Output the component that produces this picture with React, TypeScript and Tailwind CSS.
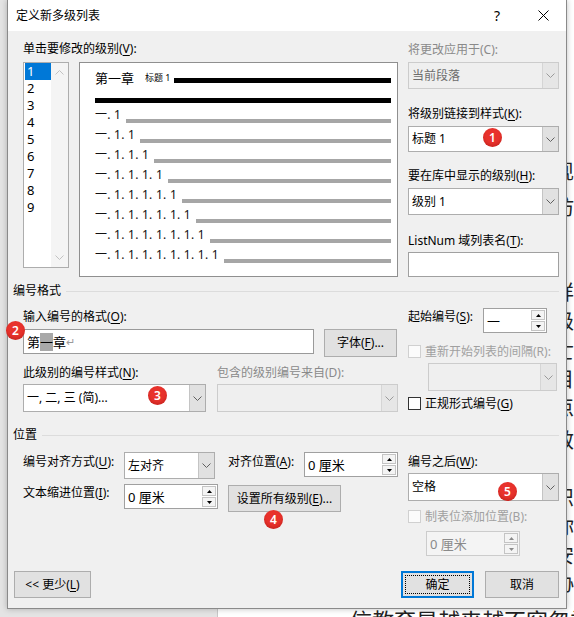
import type { ReactNode } from 'react'
import clsx from 'clsx'

const ui = "font-['Noto_Sans','Noto_Sans_CJK_SC',sans-serif]"

function U({ children }: { children: ReactNode }) {
  return <span className="underline underline-offset-[2px]">{children}</span>
}

function Chevron({ up, color = '#606060' }: { up?: boolean; color?: string }) {
  return (
    <svg width="9" height="5" viewBox="0 0 9 5" className={clsx(up && 'rotate-180')}>
      <path d="M0.5 0.5 L4.5 4.5 L8.5 0.5" fill="none" stroke={color} strokeWidth="1" />
    </svg>
  )
}

function Badge({ n, className }: { n: number; className: string }) {
  return (
    <span
      className={clsx(
        'absolute flex h-[19px] w-[19px] items-center justify-center rounded-full bg-[#e8322c] text-[12px] leading-none font-semibold text-white shadow-[inset_0_-2px_3px_rgba(120,0,0,0.25)]',
        className,
      )}
    >
      {n}
    </span>
  )
}

function Dropdown({
  text,
  disabled,
  className,
  children,
}: {
  text?: ReactNode
  disabled?: boolean
  className?: string
  children?: ReactNode
}) {
  return (
    <div
      className={clsx(
        'relative flex border',
        disabled ? 'border-[#cccccc] bg-[#efefef] text-[#6d6d6d]' : 'border-[#adadad] bg-white',
        className,
      )}
    >
      <div className="flex flex-1 items-center pl-[3px] leading-[16px] whitespace-nowrap">{text}</div>
      <div
        className={clsx(
          'flex w-[16px] items-center justify-center border-l',
          disabled ? 'border-[#d5d5d5] bg-[#e6e6e6]' : 'border-[#c4c4c4] bg-[#e1e1e1]',
        )}
      >
        <Chevron color={disabled ? '#9a9a9a' : '#606060'} />
      </div>
      {children}
    </div>
  )
}

function SpinBtn({ up, disabled }: { up?: boolean; disabled?: boolean }) {
  return (
    <div className="flex h-[10px] w-[14px] items-center justify-center border border-[#c4c4c4] bg-[#f4f4f4]">
      <svg width="5" height="3" viewBox="0 0 5 3">
        <path d={up ? 'M0 3 L2.5 0 L5 3 Z' : 'M0 0 L2.5 3 L5 0 Z'} fill={disabled ? '#8a8a8a' : '#000'} />
      </svg>
    </div>
  )
}

function Spinner({ text, disabled, className }: { text: string; disabled?: boolean; className?: string }) {
  return (
    <div
      className={clsx(
        'flex border',
        disabled ? 'border-[#cccccc] bg-[#f4f4f4] text-[#8a8a8a]' : 'border-[#a0a0a0] bg-white',
        className,
      )}
    >
      <div className="flex flex-1 items-center pl-[3px] text-[13px] leading-[16px]">{text}</div>
      <div className="flex flex-col justify-center gap-[1px] pr-[1px]">
        <SpinBtn up disabled={disabled} />
        <SpinBtn disabled={disabled} />
      </div>
    </div>
  )
}

function Checkbox({ disabled }: { disabled?: boolean }) {
  return (
    <span
      className={clsx(
        'h-[13px] w-[13px] shrink-0 border',
        disabled ? 'border-[#d0d0d0] bg-[#fbfbfb]' : 'border-[#333333] bg-white',
      )}
    />
  )
}

function Button({ children, focus, className }: { children: ReactNode; focus?: boolean; className?: string }) {
  return (
    <div
      className={clsx(
        'relative flex items-center justify-center bg-[#e1e1e1] leading-[16px] whitespace-nowrap',
        focus ? 'border-2 border-[#0078d7]' : 'border border-[#adadad]',
        className,
      )}
    >
      {focus && <span className="absolute inset-[2px] border border-dotted border-black" />}
      {children}
    </div>
  )
}

function Section({ title }: { title: string }) {
  return (
    <div className="-ml-[10px] flex h-[16px] items-center">
      <span className="leading-[16px] whitespace-nowrap">{title}</span>
      <div className="ml-[5px] h-px flex-1 bg-[#dcdcdc]" />
    </div>
  )
}

const levels = ['1', '2', '3', '4', '5', '6', '7', '8', '9']
const rows = ['一. 1', '一. 1. 1', '一. 1. 1. 1', '一. 1. 1. 1. 1', '一. 1. 1. 1. 1. 1', '一. 1. 1. 1. 1. 1. 1', '一. 1. 1. 1. 1. 1. 1. 1', '一. 1. 1. 1. 1. 1. 1. 1. 1']

const sideChars = [
  { c: '现', cls: 'mt-[158px]' },
  { c: '仿', cls: 'mt-[8px]' },
  { c: '详', cls: 'mt-[57px]' },
  { c: '级', cls: 'mt-[1px]' },
  { c: '亡', cls: 'mt-[2px]' },
  { c: '目', cls: 'mt-[0px]' },
  { c: '点', cls: 'mt-[0px]' },
  { c: '效', cls: 'mt-[5px]' },
  { c: '识', cls: 'mt-[29px]' },
  { c: '你', cls: 'mt-[1px]' },
  { c: '安', cls: 'mt-[1px]' },
  { c: '协', cls: 'mt-[0px]' },
]

export default function App() {
  return (
    <div className={clsx('relative h-[617px] w-[574px] overflow-hidden bg-white text-[12px] text-black', ui)}>
      {/* Word window behind the dialog */}
      <div className="flex h-full">
        <div className="h-full w-[230px] border-r border-[#c8c8c8] bg-[#e4e4e4]" />
        <div className="relative flex-1 bg-white text-[20px] text-[#222]">
          <div className="ml-[336px] flex flex-col">
            {sideChars.map((s) => (
              <span key={s.c} className={clsx('h-[28px] leading-[28px]', s.cls)}>
                {s.c}
              </span>
            ))}
          </div>
          <div className="absolute top-[605px] left-[132px] text-[22px] leading-[30px] whitespace-nowrap">
            信教育是越来越不容忽视。
          </div>
        </div>
      </div>

      {/* dialog */}
      <div className="absolute top-0 left-[7px] flex h-[609px] w-[560px] flex-col border-x border-b border-[#8a8a8a] bg-[#f0f0f0] shadow-[0_0_6px_rgba(0,0,0,0.25)]">
        <div className="flex h-[31px] shrink-0 items-center bg-white">
          <span className="flex-1 pl-[8px] leading-[16px]">定义新多级列表</span>
          <div className="flex h-full w-[46px] items-center justify-center text-[14px]">?</div>
          <div className="flex h-full w-[46px] items-center justify-center">
            <svg width="11" height="11" viewBox="0 0 11 11">
              <path d="M0.5 0.5 L10.5 10.5 M10.5 0.5 L0.5 10.5" stroke="#000" strokeWidth="1" />
            </svg>
          </div>
        </div>

        <div className="flex-1 pr-[7px] pl-[15px]">
          {/* levels + preview */}
          <div className="flex">
            <div className="w-[375px]">
              <div className="pt-[10px] leading-[16px]">
                单击要修改的级别(<U>V</U>):
              </div>
              <div className="mt-[5px] flex items-start">
                <div className="flex h-[206px] w-[46px] border border-[#adadad] bg-white">
                  <div className="flex-1">
                    {levels.map((l) => (
                      <div
                        key={l}
                        className={clsx(
                          'ml-[1px] h-[17px] w-[26px] pl-[2px] text-[13px] leading-[17px]',
                          l === '1' && 'bg-[#0078d7] text-white',
                        )}
                      >
                        {l}
                      </div>
                    ))}
                  </div>
                  <div className="flex w-[17px] flex-col items-center justify-between bg-[#f4f4f4] py-[7px]">
                    <Chevron up color="#c2c2c2" />
                    <Chevron color="#c2c2c2" />
                  </div>
                </div>
                <div className="ml-[10px] h-[215px] w-[319px] border border-[#8f8f8f] bg-white pr-[6px] pl-[15px]">
                  <div className="mt-[5px] flex h-[20px] items-center">
                    <span className="text-[13px] leading-[20px]">第一章</span>
                    <span className="ml-[11px] text-[9px] leading-[12px]">标题 1</span>
                    <div className="mt-[5px] ml-[3px] h-[5px] flex-1 bg-black" />
                  </div>
                  <div className="mt-[10px] h-[5px] bg-black" />
                  <div className="mt-[2px]">
                    {rows.map((r) => (
                      <div key={r} className="flex h-[20px] items-center">
                        <span className="leading-[20px] tracking-[0.25px] whitespace-pre text-[#111]">{r}</span>
                        <div className="mt-[12px] ml-[5px] h-[4px] flex-1 bg-[#a6a6a6]" />
                      </div>
                    ))}
                  </div>
                </div>
              </div>
            </div>

            <div className="ml-[10px] w-[151px]">
              <div className="pt-[11px] leading-[16px] text-[#8a8a8a]">将更改应用于(C):</div>
              <Dropdown disabled className="mt-[4px] h-[27px]" text="当前段落" />
              <div className="mt-[17px] leading-[16px]">
                将级别链接到样式(<U>K</U>):
              </div>
              <Dropdown className="mt-[4px] h-[26px]" text="标题 1">
                <Badge n={1} className="top-[1px] left-[74px]" />
              </Dropdown>
              <div className="mt-[16px] leading-[16px]">
                要在库中显示的级别(<U>H</U>):
              </div>
              <Dropdown className="mt-[4px] h-[27px]" text="级别 1" />
              <div className="mt-[18px] leading-[16px] whitespace-nowrap">
                ListNum 域列表名(<U>T</U>):
              </div>
              <div className="mt-[3px] h-[25px] border border-[#a0a0a0] bg-white" />
            </div>
          </div>

          {/* 编号格式 */}
          <div className="mt-[6px]">
            <Section title="编号格式" />
          </div>
          <div className="flex">
            <div className="w-[375px]">
              <div className="mt-[10px] leading-[16px]">
                输入编号的格式(<U>O</U>):
              </div>
              <div className="mt-[4px] flex items-start">
                <div className="relative flex h-[25px] w-[291px] items-center border border-[#9a9a9a] bg-white pl-[3px] text-[13px] leading-[18px]">
                  第<span className="bg-[#a8a8a8]">一</span>章
                  <span className="text-[11px] text-[#9a9a9a]">↵</span>
                  <Badge n={2} className="-top-[9px] -left-[18px]" />
                </div>
                <Button className="ml-[10px] h-[28px] w-[73px]">
                  字体(<U>F</U>)...
                </Button>
              </div>
              <div className="mt-[8px] flex">
                <div className="w-[183px]">
                  <div className="leading-[16px] whitespace-nowrap">
                    此级别的编号样式(<U>N</U>):
                  </div>
                  <Dropdown className="mt-[3px] h-[28px]" text="一, 二, 三 (简)...">
                    <Badge n={3} className="top-[1px] left-[124px]" />
                  </Dropdown>
                </div>
                <div className="ml-[11px] w-[181px]">
                  <div className="leading-[16px] whitespace-nowrap text-[#8a8a8a]">包含的级别编号来自(D):</div>
                  <Dropdown disabled className="mt-[3px] h-[28px]" />
                </div>
              </div>
            </div>

            <div className="ml-[10px] w-[151px]">
              <div className="mt-[9px] flex items-start">
                <div className="mt-[1px] w-[75px] leading-[16px] whitespace-nowrap">
                  起始编号(<U>S</U>):
                </div>
                <Spinner className="h-[25px] w-[64px]" text="一" />
              </div>
              <div className="mt-[12px] flex h-[13px] items-center">
                <Checkbox disabled />
                <span className="ml-[4px] leading-[16px] whitespace-nowrap text-[#a0a0a0]">重新开始列表的间隔(R):</span>
              </div>
              <Dropdown disabled className="mt-[5px] ml-[20px] h-[28px] w-[129px]" />
              <div className="mt-[6px] flex h-[13px] items-center">
                <Checkbox />
                <span className="ml-[4px] leading-[16px] whitespace-nowrap">
                  正规形式编号(<U>G</U>)
                </span>
              </div>
            </div>
          </div>

          {/* 位置 */}
          <div className="mt-[15px]">
            <Section title="位置" />
          </div>
          <div className="flex">
            <div className="w-[375px]">
              <div className="mt-[9px] flex items-start">
                <div className="mt-[2px] w-[101px] leading-[16px] whitespace-nowrap">
                  编号对齐方式(<U>U</U>):
                </div>
                <Dropdown className="h-[27px] w-[91px]" text="左对齐" />
                <div className="mt-[2px] ml-[13px] w-[76px] leading-[16px] whitespace-nowrap">
                  对齐位置(<U>A</U>):
                </div>
                <Spinner className="h-[25px] w-[94px]" text="0 厘米" />
              </div>
              <div className="mt-[5px] flex items-start">
                <div className="mt-[1px] w-[101px] leading-[16px] whitespace-nowrap">
                  文本缩进位置(<U>I</U>):
                </div>
                <Spinner className="h-[25px] w-[94px]" text="0 厘米" />
                <Button className="mt-[1px] ml-[10px] h-[27px] w-[113px]">
                  设置所有级别(<U>E</U>)...
                  <Badge n={4} className="top-[24px] left-[35px]" />
                </Button>
              </div>
            </div>

            <div className="ml-[10px] w-[151px]">
              <div className="mt-[11px] leading-[16px]">
                编号之后(<U>W</U>):
              </div>
              <Dropdown className="mt-[3px] h-[28px]" text="空格">
                <Badge n={5} className="top-[8px] left-[89px]" />
              </Dropdown>
              <div className="mt-[9px] flex h-[13px] items-center">
                <Checkbox disabled />
                <span className="ml-[4px] leading-[16px] whitespace-nowrap text-[#a0a0a0]">制表位添加位置(B):</span>
              </div>
              <Spinner disabled className="mt-[8px] ml-[18px] h-[25px] w-[94px]" text="0 厘米" />
            </div>
          </div>

          {/* buttons */}
          <div className="mt-[15px] flex items-start">
            <Button className="-ml-[9px] h-[27px] w-[77px]">
              &lt;&lt; 更少(<U>L</U>)
            </Button>
            <div className="flex-1" />
            <Button focus className="h-[27px] w-[73px]">
              确定
            </Button>
            <Button className="ml-[11px] h-[27px] w-[74px]">取消</Button>
          </div>
        </div>
      </div>
    </div>
  )
}
